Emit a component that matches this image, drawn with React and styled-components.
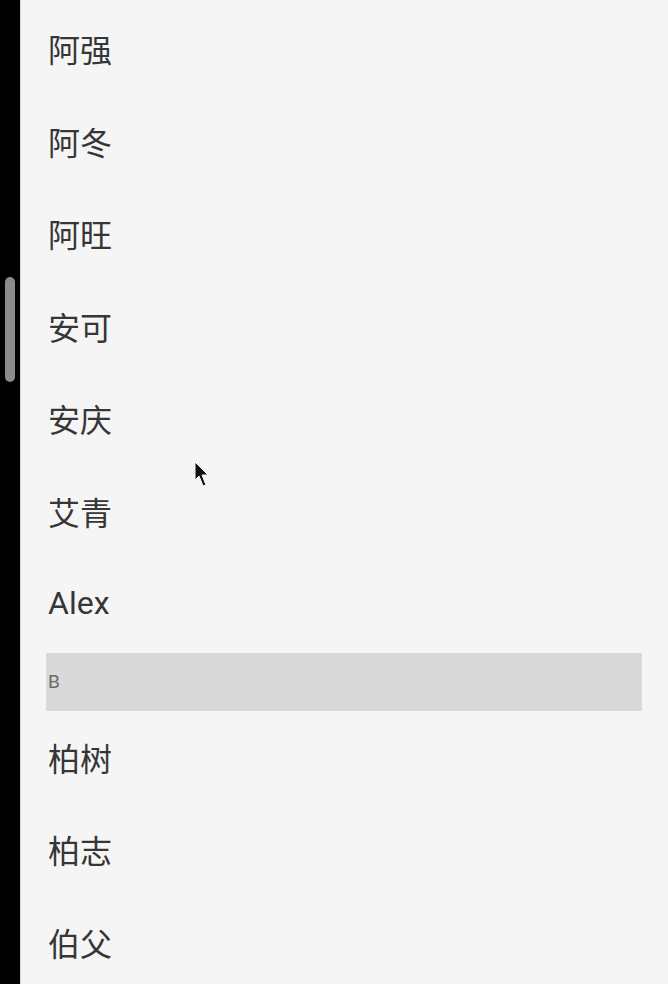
import React from "react";
import styled, { createGlobalStyle } from "styled-components";

const GlobalStyle = createGlobalStyle`
  html, body {
    margin: 0;
    padding: 0;
    background: #f5f5f5;
  }
  body {
    font-family: Roboto, "Noto Sans CJK SC", sans-serif;
  }
`;

const Screen = styled.div`
  position: relative;
  display: flex;
  width: 668px;
  height: 984px;
  overflow: hidden;
  background: #f5f5f5;
`;

const Rail = styled.div`
  position: relative;
  flex: 0 0 20px;
  background: #000;
  border-right: 1px solid #d8d8d8;
`;

const Thumb = styled.div`
  position: absolute;
  left: 5px;
  top: 277px;
  width: 10px;
  height: 105px;
  border-radius: 5px;
  background: #8a8a8a;
`;

const List = styled.div`
  flex: 1;
  padding: 2px 26px 0 25px;
  display: flex;
  flex-direction: column;
`;

const Row = styled.div`
  height: 92.5px;
  flex: 0 0 92.5px;
  display: flex;
  align-items: center;
  padding-left: 2px;
  font-family: Roboto, "Noto Sans CJK SC", sans-serif;
  font-size: 32px;
  color: #363636;
`;

const SectionBar = styled.div`
  flex: 0 0 58px;
  height: 58px;
  margin-top: 3px;
  display: flex;
  align-items: center;
  padding-left: 2px;
  background: #d9d9d9;
  font-family: Roboto, sans-serif;
  font-size: 19px;
  color: #6a6a6a;
`;

const Cursor = styled.svg`
  position: absolute;
  left: 194px;
  top: 461px;
`;

const before = ["阿强", "阿冬", "阿旺", "安可", "安庆", "艾青", "Alex"];
const after = ["柏树", "柏志", "伯父"];

export default function App() {
  return (
    <>
      <GlobalStyle />
      <Screen>
        <Rail>
          <Thumb />
        </Rail>
        <List>
          {before.map((name) => (
            <Row key={name}>{name}</Row>
          ))}
          <SectionBar>B</SectionBar>
          {after.map((name) => (
            <Row key={name}>{name}</Row>
          ))}
        </List>
        <Cursor width="16" height="28" viewBox="0 0 16 28">
          <path d="M1 1 L1 19 L5 15 L9 25 L12 24 L8 14 L14 14 Z" fill="#111" stroke="#fff" strokeWidth="1" />
        </Cursor>
      </Screen>
    </>
  );
}
